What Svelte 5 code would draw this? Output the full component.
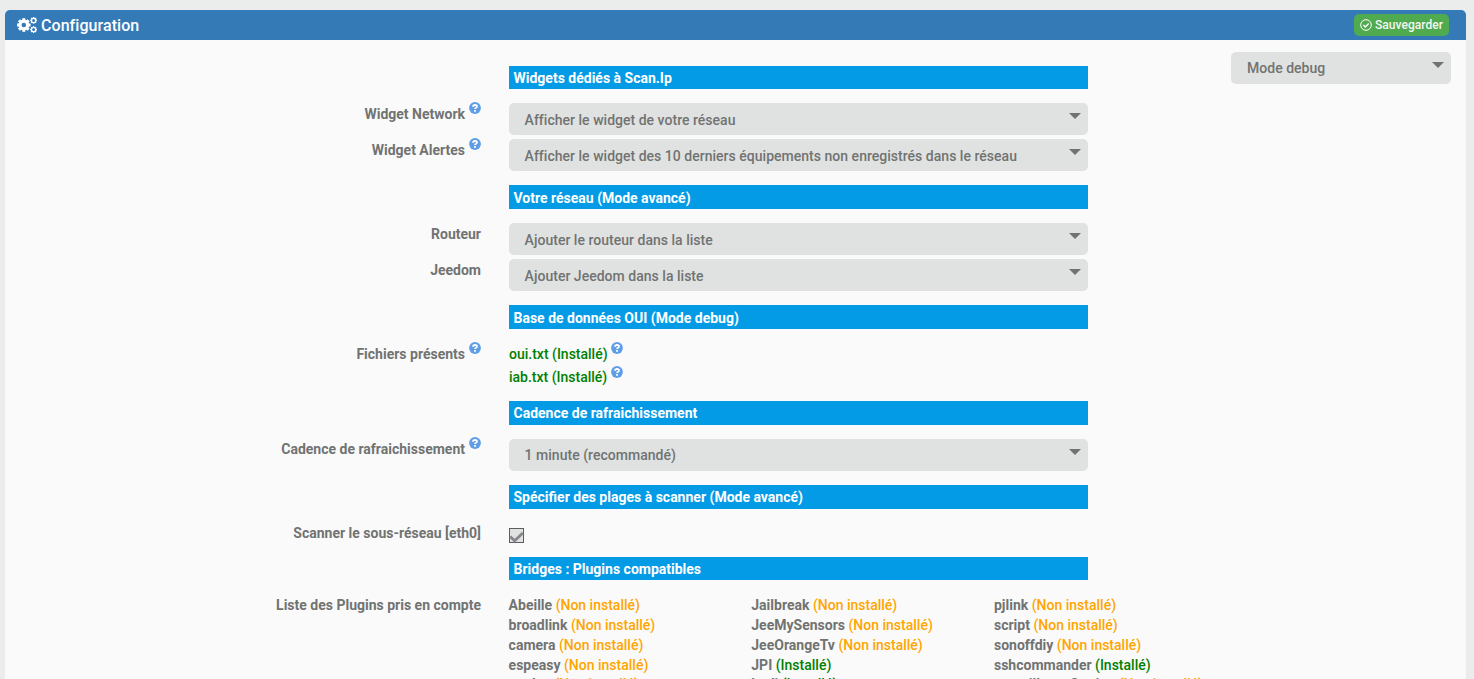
<script>
  const sections = [
    { title: 'Widgets dédiés à Scan.Ip', h: 23, rows: [
      { label: 'Widget Network', help: true, select: 'Afficher le widget de votre réseau' },
      { label: 'Widget Alertes', help: true, select: 'Afficher le widget des 10 derniers équipements non enregistrés dans le réseau' } ] },
    { title: 'Votre réseau (Mode avancé)', h: 24, low: true, rows: [
      { label: 'Routeur', select: 'Ajouter le routeur dans la liste' },
      { label: 'Jeedom', select: 'Ajouter Jeedom dans la liste' } ] },
    { title: 'Base de données OUI (Mode debug)', h: 24, low: true, rows: [
      { label: 'Fichiers présents', help: true, files: ['oui.txt (Installé)', 'iab.txt (Installé)'] } ] },
    { title: 'Cadence de rafraichissement', h: 24, rows: [
      { label: 'Cadence de rafraichissement', help: true, high: true, select: '1 minute (recommandé)' } ] },
    { title: 'Spécifier des plages à scanner (Mode avancé)', h: 24, rows: [
      { label: 'Scanner le sous-réseau [eth0]', high: true, check: true } ] },
    { title: 'Bridges : Plugins compatibles', h: 23, rows: [] }
  ];
  const plugins = [
    [['Abeille', 0], ['broadlink', 0], ['camera', 0], ['espeasy', 0], ['geoloc', 0]],
    [['Jailbreak', 0], ['JeeMySensors', 0], ['JeeOrangeTv', 0], ['JPI', 1], ['kodi', 1]],
    [['pjlink', 0], ['script', 0], ['sonoffdiy', 0], ['sshcommander', 1], ['surveillanceStation', 0]]
  ];
</script>

{#snippet help()}
  <svg class="help" viewBox="0 0 12 12"><circle cx="6" cy="6" r="5.9" fill="#5f9de6" /><path d="M4 4.7C4.1 2.5 8 2.4 8 4.5C8 5.8 6 5.6 6 7.1M6 8V9.8" fill="none" stroke="#fff" stroke-width="1.8" /></svg>
{/snippet}

{#snippet gear(cx, cy, r, hole, teeth, w)}
  <g transform="translate({cx} {cy})">
    <circle r={(r * 0.8 + hole) / 2} fill="none" stroke="#fff" stroke-width={r * 0.8 - hole} />
    {#each Array(teeth) as _, i}
      <rect x={-w / 2} y={-r} width={w} height={r * 0.4} fill="#fff" transform="rotate({(i * 360) / teeth})" />
    {/each}
  </g>
{/snippet}

<main>
  <header>
    <svg class="cogs" viewBox="0 0 20 18">
      {@render gear(6.8, 9, 6.8, 2.3, 8, 3)}
      {@render gear(16.6, 4.4, 3.4, 1.5, 8, 1.5)}
      {@render gear(16.6, 13.6, 3.4, 1.5, 8, 1.5)}
    </svg>
    <h1>Configuration</h1>
    <button class="save">
      <svg viewBox="0 0 12 12"><circle cx="6" cy="6" r="5.3" /><path d="M3.4 6.1 5.3 7.9 8.7 4.4" stroke-width="1.4" /></svg>
      <span>Sauvegarder</span>
    </button>
  </header>
  <div class="body">
    <div class="form">
      {#each sections as s}
        <div class="bar" class:low={s.low} style:height="{s.h}px">{s.title}</div>
        <div class="rows" class:empty={!s.rows.length}>
          {#each s.rows as r}
            <div class="row">
              <div class="label" class:high={r.high}><span>{r.label}</span>{#if r.help}{@render help()}{/if}</div>
              {#if r.select}
                <div class="select" class:high={r.high}><span>{r.select}</span><i></i></div>
              {:else if r.files}
                <div class="files">
                  {#each r.files as f}<div><span>{f}</span>{@render help()}</div>{/each}
                </div>
              {:else}
                <svg class="check" viewBox="0 0 15 15"><rect x=".5" y=".5" width="14" height="14" fill="#e0e2e1" stroke="#5d5d5f" /><path d="M1.2 8.6 5.6 12.8 13.8 5" fill="none" stroke="#86868c" stroke-width="2.8" /></svg>
              {/if}
            </div>
          {/each}
        </div>
      {/each}
      <div class="row">
        <div class="label"><span>Liste des Plugins pris en compte</span></div>
        <div class="plugins">
          {#each plugins as col}
            <div>
              {#each col as p}
                <div class="plugin"><b>{p[0]}</b> <span class:ok={p[1]}>({p[1] ? 'Installé' : 'Non installé'})</span></div>
              {/each}
            </div>
          {/each}
        </div>
      </div>
    </div>
    <div class="select mode"><span>Mode debug</span><i></i></div>
  </div>
</main>

<style>
  :global(body) { background: #ebeded; overflow: hidden; }
  main {
    box-sizing: border-box;
    height: 679px;
    padding: 10px 8px 0 5px;
    overflow: hidden;
    font: 500 14px/20px Roboto, sans-serif;
    color: #717372;
  }
  header {
    display: flex;
    align-items: center;
    height: 30px;
    padding: 0 17px 0 12px;
    background: #337ab7;
    color: #fff;
    border-radius: 5px 5px 0 0;
  }
  .cogs { width: 20px; height: 18px; margin-right: 4px; }
  h1 { margin: 2px 0 0; font: 500 16px/20px Roboto, sans-serif; letter-spacing: 0.06px; }
  .save {
    display: flex;
    align-items: center;
    gap: 3px;
    width: 95px;
    height: 22px;
    margin-left: auto;
    padding: 0 6px;
    border: 0;
    border-radius: 5px;
    background: #50aa50;
    color: #f3f8f3;
    font: 500 12px/20px Roboto, sans-serif;
    letter-spacing: 0.05px;
    white-space: nowrap;
  }
  .save svg { width: 12px; height: 12px; flex: none; fill: none; stroke: #fff; }
  .body { display: flex; height: 639px; background: #fafafa; }
  .form { width: 1226px; padding-top: 26px; flex: none; }
  .bar {
    box-sizing: border-box;
    width: 579px;
    margin-left: 504px;
    padding: 2px 4.5px 0;
    background: #039be6;
    color: #fff;
    font-weight: 700;
  }
  .bar.low { padding-top: 3px; }
  .rows { display: flex; flex-direction: column; gap: 4px; padding: 14px 0; }
  .rows.empty { padding: 14px 0 0; }
  .row { display: flex; align-items: flex-start; }
  .label {
    display: flex;
    justify-content: flex-end;
    width: 476px;
    margin-right: 28px;
    padding-top: 1px;
    font-weight: 700;
    flex: none;
    white-space: nowrap;
  }
  .label.high { padding-top: 0; }
  .help { width: 12px; height: 12px; margin-left: 4px; margin-top: -2px; flex: none; }
  .select {
    box-sizing: border-box;
    display: flex;
    justify-content: space-between;
    width: 579px;
    height: 32px;
    padding: 7px 7px 0 15.6px;
    border-radius: 5px;
    background: #e0e2e1;
    letter-spacing: 0.02px;
  }
  .select.high { padding-top: 6px; }
  .select i {
    width: 12px;
    height: 6px;
    margin-top: 3px;
    background: #717372;
    clip-path: polygon(0 0, 100% 0, 50% 100%);
  }
  .select.high i { margin-top: 4px; }
  .mode { width: 220px; margin-top: 12px; padding: 6px 7px 0 16px; }
  .mode i { margin-top: 4px; }
  .files { color: #008000; height: 43px; padding-top: 1px; }
  .files div { display: flex; height: 23px; }
  .files .help { margin-left: 3.5px; }
  .files div:last-child .help { margin-top: -1px; }
  .check { width: 15px; height: 15px; margin: 5px 0 0; }
  .plugins { display: flex; padding-top: 1px; margin-left: -0.4px; }
  .plugins > div { width: 242.7px; }
  .plugin { height: 20px; white-space: nowrap; color: #ffa500; }
  .plugin:last-child { margin-top: -1px; }
  .plugin b { font-weight: 700; color: #717372; }
  .ok { color: #008000; }
</style>
